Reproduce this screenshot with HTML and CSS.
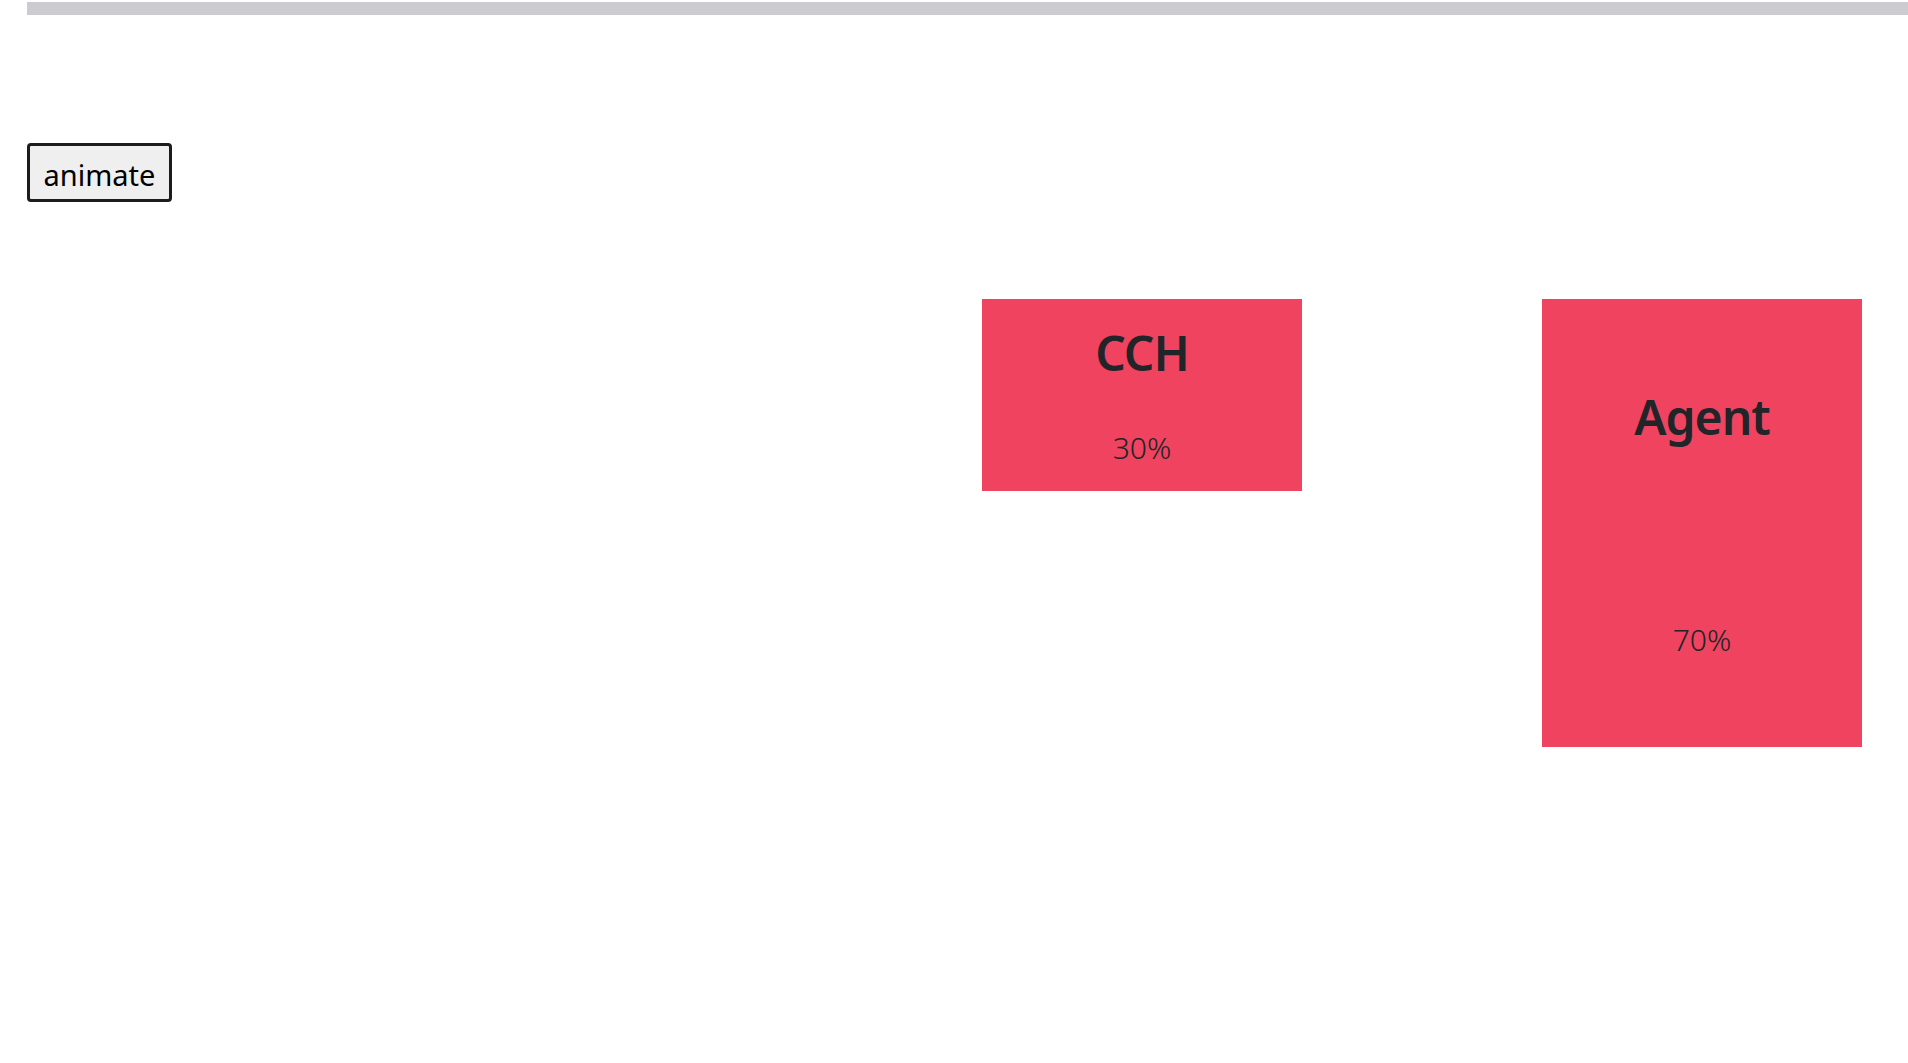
FILE: index.html
```html
<!DOCTYPE html>
<html>
<head>
<meta charset="utf-8">
<link rel="stylesheet" href="styles.css">
</head>
<body>
<div class="page">
  <div class="topbar"></div>
  <button class="animate-btn">animate</button>
  <div class="chart">
    <div class="bar bar-30">
      <h1 class="label">CCH</h1>
      <p class="pct">30%</p>
    </div>
    <div class="bar bar-70">
      <h1 class="label">Agent</h1>
      <p class="pct">70%</p>
    </div>
  </div>
</div>
</body>
</html>
```

FILE: styles.css
```css
html, body {
  margin: 0;
  padding: 0;
  background: #ffffff;
}
body {
  font-family: "Noto Sans", "Open Sans", sans-serif;
  color: #212529;
  overflow: hidden;
}
.page {
  padding: 2px 0 0 27px;
}
.topbar {
  height: 13px;
  background: #cbcbd0;
}
.animate-btn {
  display: block;
  margin-top: 128px;
  width: 145px;
  height: 59px;
  padding: 4px 0 0;
  font-family: "Noto Sans", "Open Sans", sans-serif;
  font-size: 29px;
  color: #000;
  background: #efefef;
  border: 3px solid #1c1c1c;
  border-radius: 4px;
}
.chart {
  display: flex;
  justify-content: flex-end;
  align-items: flex-start;
  gap: 240px;
  padding-right: 46px;
  margin-top: 97px;
}
.bar {
  width: 320px;
  background: #ef435f;
  display: flex;
  flex-direction: column;
  justify-content: space-around;
  align-items: center;
}
.bar-30 { height: 192px; }
.bar-70 { height: 448px; }
.label {
  margin: 0;
  font-size: 48px;
  font-weight: 600;
  letter-spacing: -1px;
  line-height: 1.2;
}
.pct {
  margin: 0;
  font-size: 30px;
  font-weight: 300;
  line-height: 1.2;
}
```
